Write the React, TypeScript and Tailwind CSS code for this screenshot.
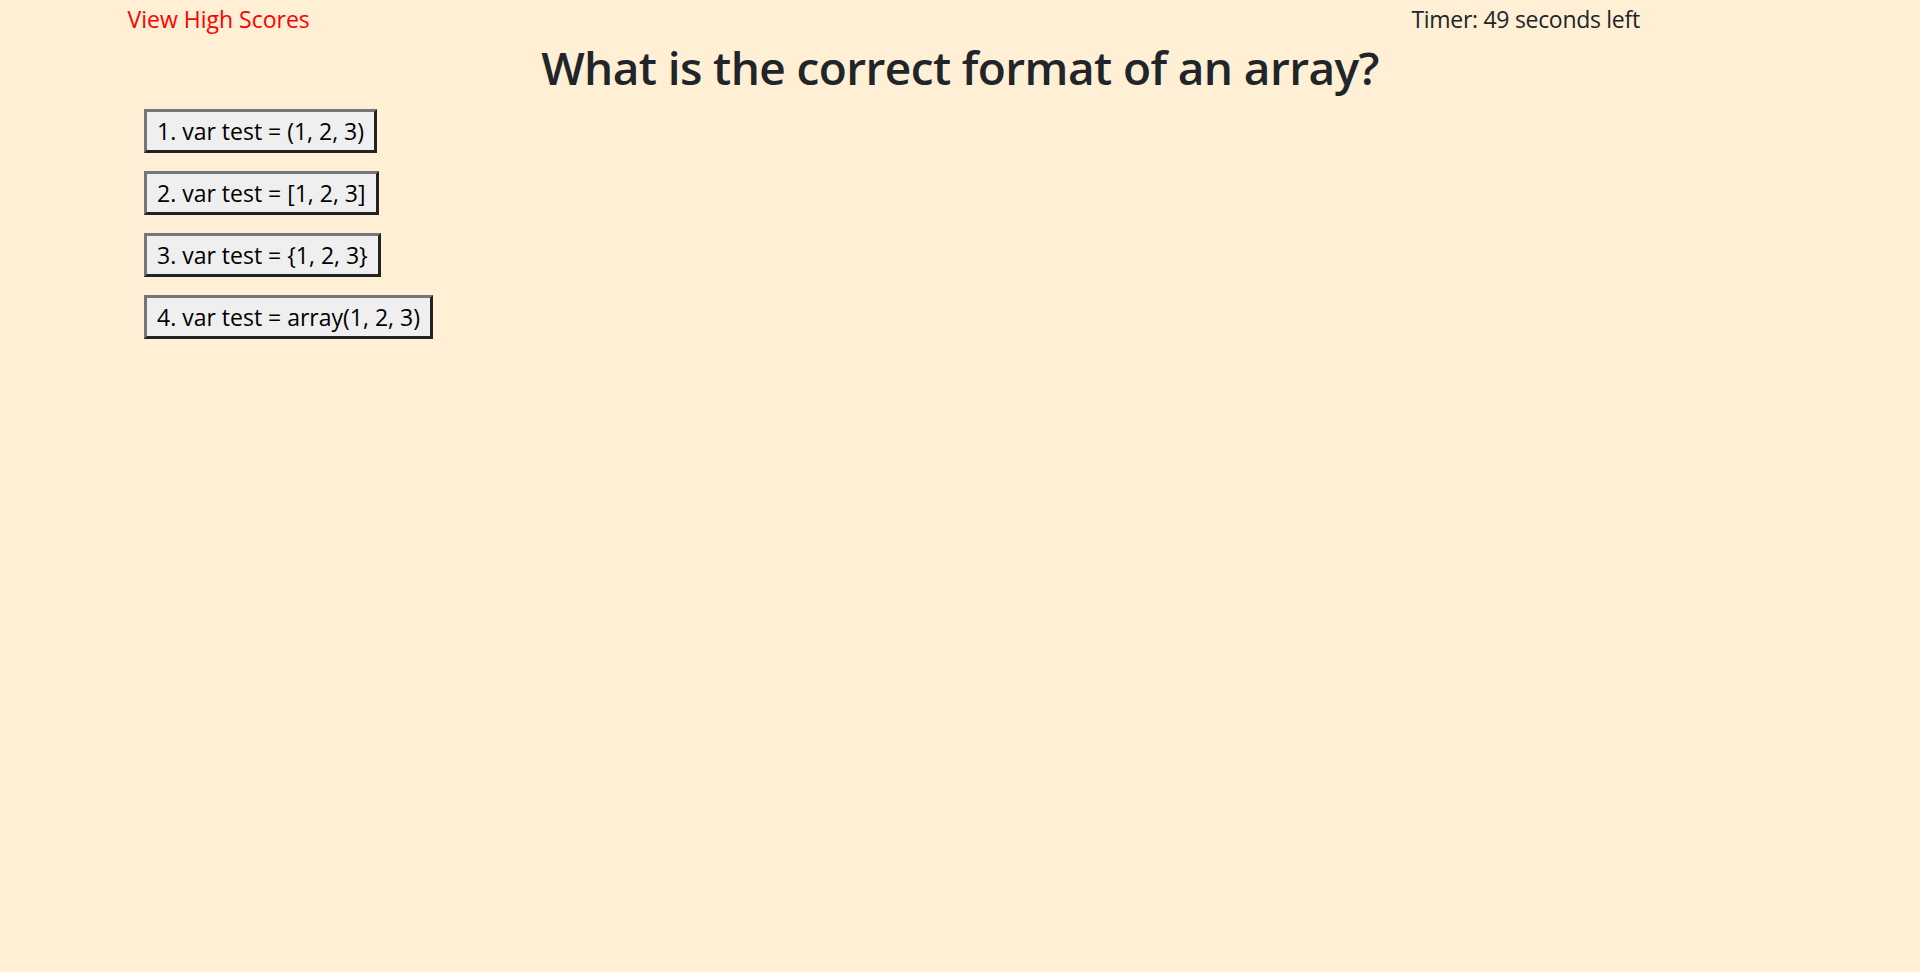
import React from 'react';

const choices = [
    '1. var test = (1, 2, 3)',
    '2. var test = [1, 2, 3]',
    '3. var test = {1, 2, 3}',
    '4. var test = array(1, 2, 3)',
];

const App: React.FC = () => {
    return (
        <div className="min-h-screen w-full bg-[#ffefd5] text-[#212529] font-['Open_Sans',sans-serif] text-[23px] leading-[36px]">
            <div className="mx-auto w-[1665px] pt-[1px] flex justify-between">
                <a href="#" className="text-[#ff0000]">View High Scores</a>
                <div className="w-[381px] tracking-[-0.3px]">Timer: 49 seconds left</div>
            </div>

            <h1 className="text-center text-[46px] leading-[58px] font-semibold tracking-[-0.6px] mt-[1px]">
                What is the correct format of an array?
            </h1>

            <div className="ml-[144px] mt-[13px] flex flex-col items-start gap-[18px]">
                {choices.map((choice) => (
                    <button
                        key={choice}
                        className="h-[44px] px-[10px] bg-[#efefef] text-black border-[3px] border-t-[#767676] border-l-[#767676] border-r-[#222222] border-b-[#222222] leading-[32px]"
                    >
                        {choice}
                    </button>
                ))}
            </div>
        </div>
    );
};

export default App;
